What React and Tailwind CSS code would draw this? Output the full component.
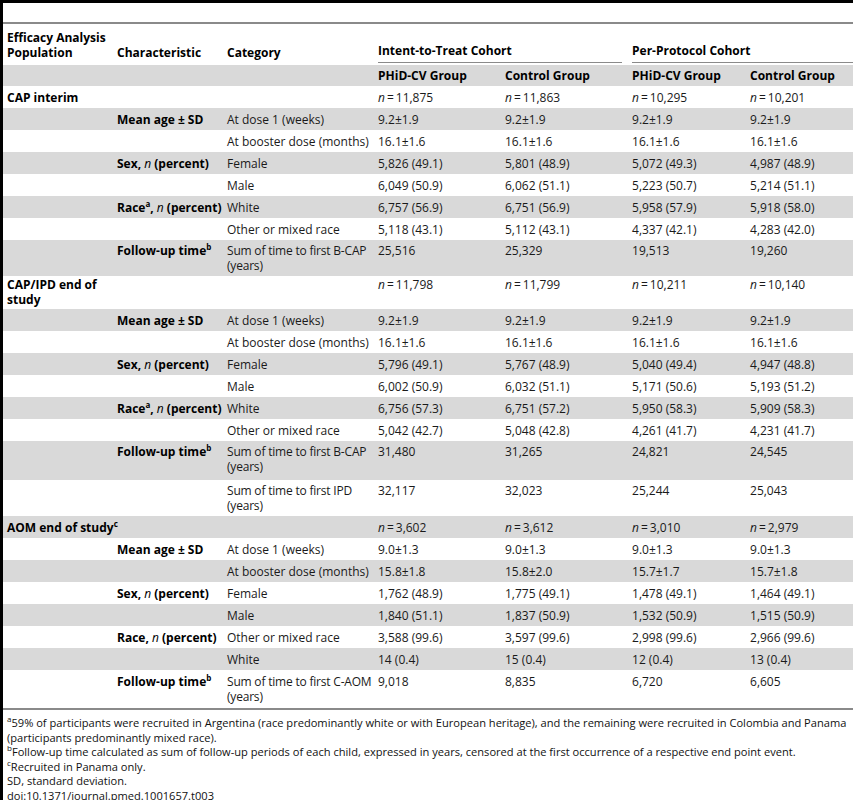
import React from 'react';

const N = ({ v }) => (
    <span>
        <i>n</i>{'\u2009=\u2009'}{v}
    </span>
);

const Sup = ({ c }) => <span className="text-[8px] relative -top-[5px] leading-none">{c}</span>;

const Pct = ({ children }) => <span className="italic font-normal">{children}</span>;

const Sum = ({ what }) => (
    <span className="tracking-[-0.2px]">
        Sum of time to first {what}
        <br />
        (years)
    </span>
);

// padding per row type: s = single line, d = two-line category, e = taller two-line, p = wrapped population label
const pad = {
    s: 'pt-[4px] pb-[3px]',
    d: 'pt-[3px] pb-[3px]',
    e: 'pt-[3px] pb-[6px]',
    f: 'pt-[4px] pb-[4px]',
    p: 'pt-[1px] pb-[2px]',
};

// [type, population, characteristic, category, itt phid, itt control, pp phid, pp control]
const rows = [
    ['s', <>CAP interim</>, null, null, <N v="11,875" />, <N v="11,863" />, <N v="10,295" />, <N v="10,201" />],
    ['s', null, <>Mean age ± SD</>, 'At dose 1 (weeks)', '9.2±1.9', '9.2±1.9', '9.2±1.9', '9.2±1.9'],
    ['s', null, null, 'At booster dose (months)', '16.1±1.6', '16.1±1.6', '16.1±1.6', '16.1±1.6'],
    ['s', null, <>Sex, <Pct>n</Pct> (percent)</>, 'Female', '5,826 (49.1)', '5,801 (48.9)', '5,072 (49.3)', '4,987 (48.9)'],
    ['s', null, null, 'Male', '6,049 (50.9)', '6,062 (51.1)', '5,223 (50.7)', '5,214 (51.1)'],
    ['s', null, <>Race<Sup c="a" />, <Pct>n</Pct> (percent)</>, 'White', '6,757 (56.9)', '6,751 (56.9)', '5,958 (57.9)', '5,918 (58.0)'],
    ['s', null, null, 'Other or mixed race', '5,118 (43.1)', '5,112 (43.1)', '4,337 (42.1)', '4,283 (42.0)'],
    ['d', null, <>Follow-up time<Sup c="b" /></>, <Sum what="B-CAP" />, '25,516', '25,329', '19,513', '19,260'],
    ['p', <>CAP/IPD end of<br />study</>, null, null, <N v="11,798" />, <N v="11,799" />, <N v="10,211" />, <N v="10,140" />],
    ['s', null, <>Mean age ± SD</>, 'At dose 1 (weeks)', '9.2±1.9', '9.2±1.9', '9.2±1.9', '9.2±1.9'],
    ['s', null, null, 'At booster dose (months)', '16.1±1.6', '16.1±1.6', '16.1±1.6', '16.1±1.6'],
    ['s', null, <>Sex, <Pct>n</Pct> (percent)</>, 'Female', '5,796 (49.1)', '5,767 (48.9)', '5,040 (49.4)', '4,947 (48.8)'],
    ['s', null, null, 'Male', '6,002 (50.9)', '6,032 (51.1)', '5,171 (50.6)', '5,193 (51.2)'],
    ['s', null, <>Race<Sup c="a" />, <Pct>n</Pct> (percent)</>, 'White', '6,756 (57.3)', '6,751 (57.2)', '5,950 (58.3)', '5,909 (58.3)'],
    ['s', null, null, 'Other or mixed race', '5,042 (42.7)', '5,048 (42.8)', '4,261 (41.7)', '4,231 (41.7)'],
    ['e', null, <>Follow-up time<Sup c="b" /></>, <Sum what="B-CAP" />, '31,480', '31,265', '24,821', '24,545'],
    ['d', null, null, <Sum what="IPD" />, '32,117', '32,023', '25,244', '25,043'],
    ['s', <>AOM end of study<Sup c="c" /></>, null, null, <N v="3,602" />, <N v="3,612" />, <N v="3,010" />, <N v="2,979" />],
    ['s', null, <>Mean age ± SD</>, 'At dose 1 (weeks)', '9.0±1.3', '9.0±1.3', '9.0±1.3', '9.0±1.3'],
    ['s', null, null, 'At booster dose (months)', '15.8±1.8', '15.8±2.0', '15.7±1.7', '15.7±1.8'],
    ['s', null, <>Sex, <Pct>n</Pct> (percent)</>, 'Female', '1,762 (48.9)', '1,775 (49.1)', '1,478 (49.1)', '1,464 (49.1)'],
    ['s', null, null, 'Male', '1,840 (51.1)', '1,837 (50.9)', '1,532 (50.9)', '1,515 (50.9)'],
    ['s', null, <>Race, <Pct>n</Pct> (percent)</>, 'Other or mixed race', '3,588 (99.6)', '3,597 (99.6)', '2,998 (99.6)', '2,966 (99.6)'],
    ['s', null, null, 'White', '14 (0.4)', '15 (0.4)', '12 (0.4)', '13 (0.4)'],
    ['f', null, <>Follow-up time<Sup c="b" /></>, <Sum what="C-AOM" />, '9,018', '8,835', '6,720', '6,605'],
];

const App = () => {
    return (
        <div
            className="w-[853px] h-[800px] overflow-hidden bg-white border-l-[3px] border-t-[3px] border-black text-[#111] text-[12px] leading-[15px]"
            style={{ fontFamily: '"Open Sans", "Liberation Sans", sans-serif' }}
        >
            <div className="h-[19px]" />
            <table className="w-full table-fixed border-collapse border-t-2 border-[#8a8a8a] whitespace-nowrap">
                <colgroup>
                    <col className="w-[110px]" />
                    <col className="w-[110px]" />
                    <col className="w-[151px]" />
                    <col className="w-[127px]" />
                    <col className="w-[127px]" />
                    <col className="w-[118px]" />
                    <col />
                </colgroup>
                <thead className="font-bold text-black">
                    <tr>
                        <th className="text-left align-bottom px-1 pt-[6px] pb-[3px] font-bold">Efficacy Analysis<br />Population</th>
                        <th className="text-left align-bottom px-1 pb-[3px] font-bold">Characteristic</th>
                        <th className="text-left align-bottom px-1 pb-[3px] font-bold">Category</th>
                        <th colSpan={2} className="text-left align-bottom pl-1 pr-[6px] pb-0 font-bold">
                            <div className="pb-[4px] border-b border-[#8a8a8a]">Intent-to-Treat Cohort</div>
                        </th>
                        <th colSpan={2} className="text-left align-bottom pl-1 pb-0 font-bold">
                            <div className="pb-[4px] border-b border-[#8a8a8a]">Per-Protocol Cohort</div>
                        </th>
                    </tr>
                    <tr className="bg-[#d9d9d9] border-t-2 border-white">
                        <th className="px-1 pt-[3px] pb-[3px]" />
                        <th className="px-1 pt-[3px] pb-[3px]" />
                        <th className="px-1 pt-[3px] pb-[3px]" />
                        <th className="text-left px-1 pt-[3px] pb-[3px] font-bold">PHiD-CV Group</th>
                        <th className="text-left px-1 pt-[3px] pb-[3px] font-bold">Control Group</th>
                        <th className="text-left px-1 pt-[3px] pb-[3px] font-bold">PHiD-CV Group</th>
                        <th className="text-left px-1 pt-[3px] pb-[3px] font-bold">Control Group</th>
                    </tr>
                </thead>
                <tbody>
                    {rows.map(([type, ...cells], i) => (
                        <tr key={i} className={i % 2 === 1 ? 'bg-[#d9d9d9]' : 'bg-white'}>
                            {cells.map((c, j) => (
                                <td
                                    key={j}
                                    className={`align-top px-1 ${pad[type]} ${j < 2 ? 'font-bold text-black' : 'text-[#1a1a1a]'}`}
                                >
                                    {c}
                                </td>
                            ))}
                        </tr>
                    ))}
                </tbody>
            </table>
            <div className="border-t-2 border-[#8a8a8a] pt-[6px] px-1 text-[11.1px] leading-[14.6px] text-[#111] whitespace-nowrap">
                <p>
                    <Sup c="a" />59% of participants were recruited in Argentina (race predominantly white or with European heritage), and the remaining were recruited in Colombia and Panama
                    <br />(participants predominantly mixed race).
                </p>
                <p>
                    <Sup c="b" />Follow-up time calculated as sum of follow-up periods of each child, expressed in years, censored at the first occurrence of a respective end point event.
                </p>
                <p>
                    <Sup c="c" />Recruited in Panama only.
                </p>
                <p>SD, standard deviation.</p>
                <p>doi:10.1371/journal.pmed.1001657.t003</p>
            </div>
        </div>
    );
};

export default App;
